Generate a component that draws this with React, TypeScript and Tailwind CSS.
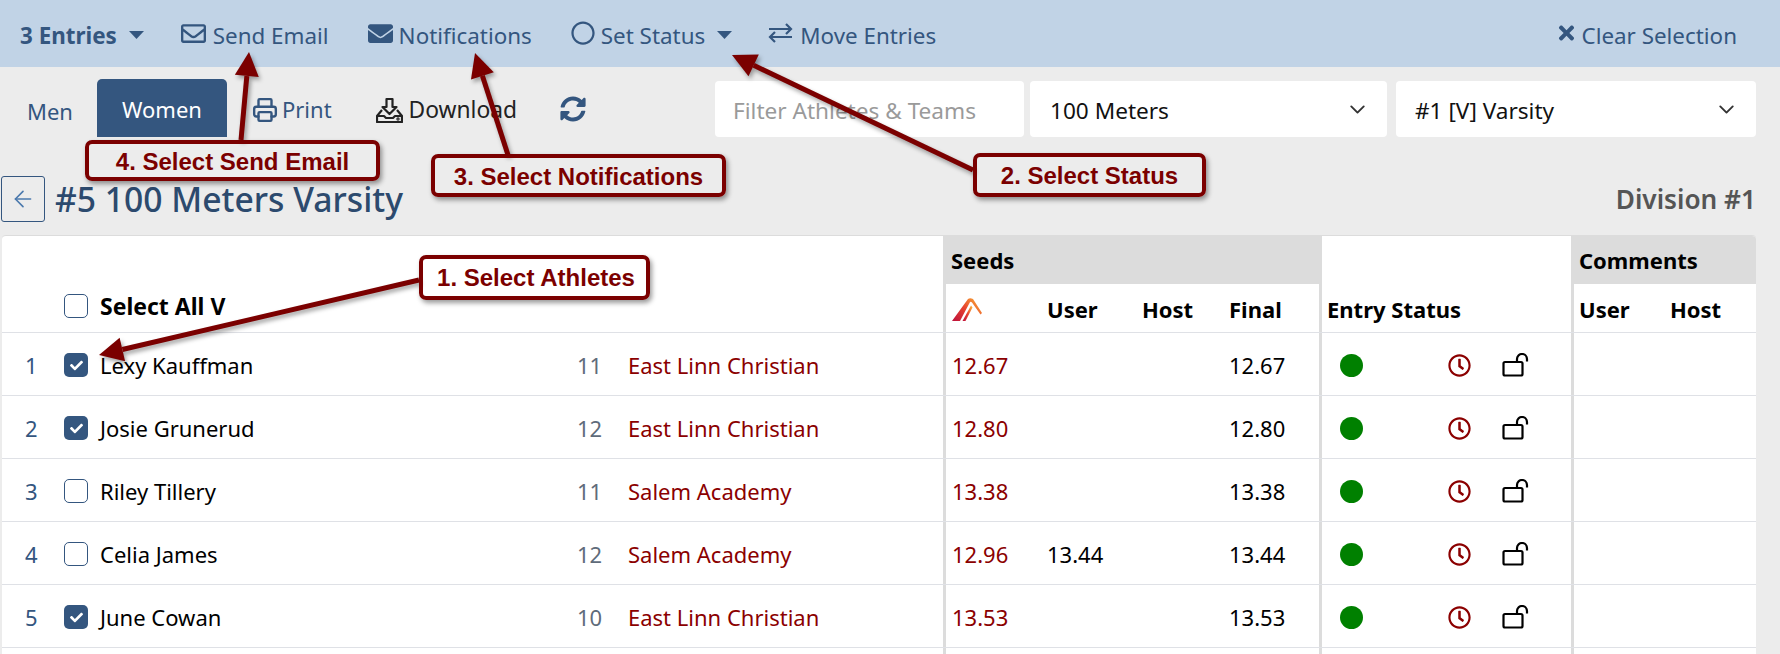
import React from "react";
import { FaRegEnvelope, FaEnvelope, FaRegCircle, FaTimes, FaSyncAlt, FaRegClock, FaCheck } from "react-icons/fa";
import { Printer, ArrowLeft, ChevronDown } from "lucide-react";

const rows = [
  { n: 1, name: "Lexy Kauffman", g: 11, team: "East Linn Christian", seed: "12.67", user: "", final: "12.67", on: true },
  { n: 2, name: "Josie Grunerud", g: 12, team: "East Linn Christian", seed: "12.80", user: "", final: "12.80", on: true },
  { n: 3, name: "Riley Tillery", g: 11, team: "Salem Academy", seed: "13.38", user: "", final: "13.38", on: false },
  { n: 4, name: "Celia James", g: 12, team: "Salem Academy", seed: "12.96", user: "13.44", final: "13.44", on: false },
  { n: 5, name: "June Cowan", g: 10, team: "East Linn Christian", seed: "13.53", user: "", final: "13.53", on: true },
];

function Box({ on }: { on: boolean }) {
  return on ? (
    <span className="flex h-[24px] w-[24px] items-center justify-center rounded-[5px] bg-[#34567f] text-white">
      <FaCheck className="h-[13px] w-[13px]" />
    </span>
  ) : (
    <span className="block h-[24px] w-[24px] rounded-[5px] border border-[#34567f] bg-white" />
  );
}

function Caret() {
  return (
    <svg viewBox="0 0 15 8" className="h-[8px] w-[15px]" fill="currentColor">
      <path d="M0 0h15L7.5 8z" />
    </svg>
  );
}

function ExchangeIcon() {
  return (
    <svg viewBox="0 0 25 20" className="h-[20px] w-[25px]" fill="none" stroke="currentColor" strokeWidth="2.2">
      <path d="M1 6h22M18 1l5 5-5 5" />
      <path d="M24 14H2M7 9l-5 5 5 5" />
    </svg>
  );
}

function DownloadIcon() {
  return (
    <svg viewBox="0 0 27 27" className="h-[27px] w-[27px]" fill="none" stroke="currentColor" strokeWidth="2.2" strokeLinejoin="round">
      <path d="M10.5 2h6v8h4l-7 7-7-7h4z" />
      <path d="M6 13l-5 6v6h25v-6l-5-6" />
      <path d="M1 19h7l2 2h7l2-2h7" />
      <circle cx="22" cy="22" r="0.6" />
    </svg>
  );
}

function LockIcon() {
  return (
    <svg viewBox="0 0 27 24" className="h-[24px] w-[27px]" fill="none" stroke="#000" strokeWidth="2.2">
      <rect x="1.5" y="9" width="19" height="13.5" rx="1.5" />
      <path d="M15 9V6a4.7 4.7 0 0 1 10 0v2.5" />
    </svg>
  );
}

function Logo() {
  return (
    <svg viewBox="0 0 30 23" className="h-[23px] w-[30px]">
      <defs>
        <linearGradient id="lg" x1="0" y1="1" x2="1" y2="0.2">
          <stop offset="0" stopColor="#bd0f3c" />
          <stop offset="0.55" stopColor="#e8452f" />
          <stop offset="1" stopColor="#f8a835" />
        </linearGradient>
      </defs>
      <path d="M0 23 L16 1 Q18 -0.5 21 1 L30 15 L28.5 16.5 L20 4.5 Q18.5 3 17.5 5 L8 23 Z" fill="url(#lg)" />
      <path d="M10.5 23 L19 7.5 L20.5 9.5 L13.5 23 Z" fill="url(#lg)" />
    </svg>
  );
}

function Callout({ className, children }: { className: string; children: React.ReactNode }) {
  return (
    <div className={`absolute flex items-center justify-center rounded-[7px] border-[4px] border-[#7b0000] font-['Liberation_Sans',Arial,sans-serif] text-[24px] font-bold text-[#7b0000] shadow-[2px_3px_5px_rgba(0,0,0,0.4)] ${className}`}>
      {children}
    </div>
  );
}

function Arrow({ x1, y1, x2, y2 }: { x1: number; y1: number; x2: number; y2: number }) {
  const dx = x2 - x1, dy = y2 - y1;
  const len = Math.hypot(dx, dy);
  const ux = dx / len, uy = dy / len;
  const hl = 24, hw = 12;
  const bx = x2 - ux * hl, by = y2 - uy * hl;
  const pts = `${x2},${y2} ${bx - uy * hw},${by + ux * hw} ${bx + uy * hw},${by - ux * hw}`;
  return (
    <g>
      <line x1={x1} y1={y1} x2={bx} y2={by} stroke="#7b0000" strokeWidth="5" />
      <polygon points={pts} fill="#7b0000" />
    </g>
  );
}

export default function App() {
  return (
    <div className="relative h-[654px] w-[1780px] overflow-hidden bg-[#ececec] font-['Noto_Sans',sans-serif] text-[22px] text-black">
      {/* Selection bar */}
      <div className="flex h-[67px] items-center bg-[#c1d3e6] pl-[20px] pr-[43px] text-[22.4px] text-[#34567f]">
        <span className="pt-[5px] font-bold">3 Entries</span>
        <span className="ml-[12px] pt-[3px]"><Caret /></span>
        <span className="ml-[37px] flex items-center gap-[7px]"><FaRegEnvelope className="h-[25px] w-[25px]" /><span className="pt-[5px]">Send Email</span></span>
        <span className="ml-[39px] flex items-center gap-[6px]"><FaEnvelope className="h-[25px] w-[25px]" /><span className="pt-[5px]">Notifications</span></span>
        <span className="ml-[39px] flex items-center gap-[6px]"><FaRegCircle className="h-[24px] w-[24px]" /><span className="pt-[5px]">Set Status</span></span>
        <span className="ml-[12px] pt-[3px]"><Caret /></span>
        <span className="ml-[36px] flex items-center gap-[7px]"><ExchangeIcon /><span className="pt-[5px]">Move Entries</span></span>
        <span className="ml-auto flex items-center gap-[5px]"><FaTimes className="h-[22px] w-[19px]" /><span className="pt-[5px]">Clear Selection</span></span>
      </div>

      {/* Tabs and filters */}
      <div className="flex h-[70px] items-start pt-[12px]">
        <span className="mt-[16px] ml-[27px] text-[#34567f]">Men</span>
        <span className="ml-[24px] flex h-[58px] w-[130px] items-center justify-center rounded-t-[5px] bg-[#34567f] pt-[2px] text-white">Women</span>
        <span className="mt-[14px] ml-[25px] flex items-center gap-[4px] text-[#34567f]"><Printer className="h-[26px] w-[26px]" strokeWidth={2.2} />Print</span>
        <span className="mt-[14px] ml-[44px] flex items-center gap-[6px] text-[22.8px] text-[#222]"><DownloadIcon />Download</span>
        <FaSyncAlt className="mt-[17px] ml-[43px] h-[26px] w-[26px] text-[#34567f]" />
        <div className="mt-[2px] ml-auto mr-[24px] flex gap-[6px] text-[22.6px]">
          <div className="flex h-[56px] w-[309px] items-center rounded-[4px] bg-white pt-[3px] pl-[18px] text-[#9a9a9a]">Filter Athletes &amp; Teams</div>
          <div className="flex h-[56px] w-[357px] items-center justify-between rounded-[4px] bg-white pl-[20px] pr-[17px] text-[#111]"><span className="pt-[3px]">100 Meters</span><ChevronDown className="h-[25px] w-[25px] text-[#333]" strokeWidth={1.8} /></div>
          <div className="ml-[3px] flex h-[56px] w-[360px] items-center justify-between rounded-[4px] bg-white pl-[19px] pr-[17px] text-[#111]"><span className="pt-[3px]">#1 [V] Varsity</span><ChevronDown className="h-[25px] w-[25px] text-[#333]" strokeWidth={1.8} /></div>
        </div>
      </div>

      {/* Title */}
      <div className="flex h-[98px] items-start pl-[1px] pr-[24px] pt-[39px]">
        <span className="flex h-[46px] w-[44px] items-center justify-center rounded-[3px] border border-[#34567f] text-[#4b79ad]"><ArrowLeft className="h-[26px] w-[26px]" strokeWidth={1.5} /></span>
        <span className="ml-[10px] text-[33.7px] leading-[46px] font-medium text-[#2c4a6e]">#5 100 Meters Varsity</span>
        <span className="ml-auto text-[26.2px] leading-[46px] font-semibold text-[#555]">Division #1</span>
      </div>

      {/* Table */}
      <div className="ml-[2px] mr-[24px] h-[420px] overflow-hidden rounded-t-[4px] border-t border-[#dcdcdc] bg-white">
        {/* Header */}
        <div className="flex h-[97px] border-b border-[#dfe1e6] font-bold">
          <div className="flex w-[941px] items-end pb-[9px]">
            <span className="ml-[62px] mb-[5px]"><Box on={false} /></span>
            <span className="ml-[12px] text-[23px]">Select All V</span>
          </div>
          <div className="flex w-[376px] flex-col">
            <div className="flex h-[48px] items-center bg-[#dcdcdc] pl-[8px]">Seeds</div>
            <div className="flex flex-1 items-center border-l-[3px] border-[#dcdcdc] pt-[3px] pl-[6px]">
              <span className="w-[95px]"><Logo /></span>
              <span className="w-[95px]">User</span>
              <span className="w-[87px]">Host</span>
              <span>Final</span>
            </div>
          </div>
          <div className="flex w-[252px] items-end border-l-[3px] border-[#dcdcdc] pb-[6px] pl-[5px]">Entry Status</div>
          <div className="flex flex-1 flex-col border-l-[3px] border-[#dcdcdc]">
            <div className="flex h-[48px] items-center bg-[#dcdcdc] pl-[5px]">Comments</div>
            <div className="flex flex-1 items-center pt-[3px] pl-[5px]">
              <span className="w-[91px]">User</span>
              <span>Host</span>
            </div>
          </div>
        </div>
        {/* Rows */}
        {rows.map((r) => (
          <div key={r.n} className="flex h-[63px] items-stretch border-b border-[#dfe1e6]">
            <div className="flex w-[941px] items-center pt-[2px]">
              <span className="w-[62px] pt-[1px] pl-[23px] text-[#34567f]">{r.n}</span>
              <Box on={r.on} />
              <span className="ml-[12px] w-[477px] pt-[1px]">{r.name}</span>
              <span className="w-[51px] pt-[1px] text-[#5f6b7a]">{r.g}</span>
              <span className="pt-[1px] text-[#8b0000]">{r.team}</span>
            </div>
            <div className="flex w-[376px] items-center border-l-[3px] border-[#dcdcdc] pt-[3px] pl-[6px]">
              <span className="w-[95px] text-[#8b0000]">{r.seed}</span>
              <span className="w-[182px]">{r.user}</span>
              <span>{r.final}</span>
            </div>
            <div className="flex w-[252px] items-center border-l-[3px] border-[#dcdcdc] pt-[2px] pl-[18px]">
              <span className="h-[23px] w-[23px] rounded-full bg-[#008000]" />
              <FaRegClock className="ml-[85px] h-[23px] w-[23px] text-[#8b0000]" />
              <span className="ml-[31px]"><LockIcon /></span>
            </div>
            <div className="flex-1 border-l-[3px] border-[#dcdcdc]" />
          </div>
        ))}
        <div className="flex h-[63px]">
          <div className="w-[941px]" />
          <div className="w-[376px] border-l-[3px] border-[#dcdcdc]" />
          <div className="w-[252px] border-l-[3px] border-[#dcdcdc]" />
          <div className="flex-1 border-l-[3px] border-[#dcdcdc]" />
        </div>
      </div>

      {/* Tutorial annotations */}
      <svg className="pointer-events-none absolute top-0 left-0 h-[654px] w-[1780px] drop-shadow-[2px_3px_2px_rgba(0,0,0,0.35)]" viewBox="0 0 1780 654">
        <Arrow x1={241} y1={140} x2={249} y2={52} />
        <Arrow x1={508} y1={155} x2={475} y2={53} />
        <Arrow x1={973} y1={170} x2={732} y2={55} />
        <Arrow x1={419} y1={280} x2={99} y2={355} />
      </svg>
      <Callout className="top-[140px] left-[85px] h-[41px] w-[295px] pt-[2px]">4. Select Send Email</Callout>
      <Callout className="top-[154px] left-[431px] h-[43px] w-[295px] pt-[2px]">3. Select Notifications</Callout>
      <Callout className="top-[153px] left-[973px] h-[44px] w-[233px] pt-[2px]">2. Select Status</Callout>
      <Callout className="top-[255px] left-[419px] h-[45px] w-[231px] pl-[3px]">1. Select Athletes</Callout>
    </div>
  );
}
